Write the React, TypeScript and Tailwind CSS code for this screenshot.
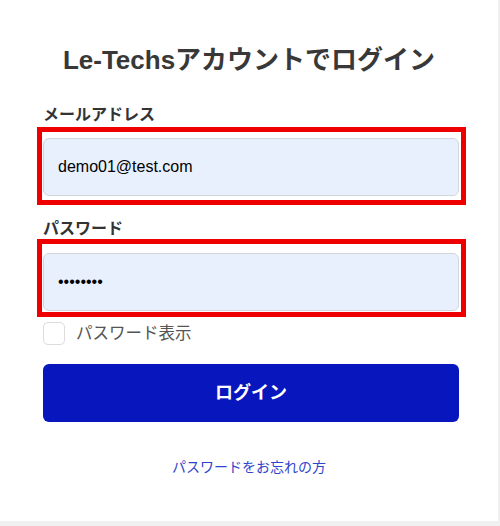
import React, { useState } from 'react';

const jp = "font-['Liberation_Sans','Noto_Sans_CJK_JP',sans-serif]";

export default function App() {
  const [email, setEmail] = useState('demo01@test.com');
  const [password, setPassword] = useState('password');
  const [showPassword, setShowPassword] = useState(false);

  return (
    <div className={`min-h-[526px] w-[500px] bg-[#f0f0f0] ${jp}`}>
      <div className="flex h-[521px] w-[498px] flex-col bg-white">
        <h1 className="mt-[41px] text-center text-[26px] leading-[38px] font-semibold text-[#383838]">
          Le-Techsアカウントでログイン
        </h1>

        <div className="mt-[24px] flex w-[429px] flex-col self-start ml-[37px]">
          <label htmlFor="email" className="ml-[6px] text-[16px] leading-[24px] font-bold text-[#333]">
            メールアドレス
          </label>
          <div className="border-[5px] border-[#ee0000] pt-[6px] pb-[4px] pl-[1px] pr-[2px]">
            <input
              id="email"
              type="email"
              value={email}
              onChange={(e) => setEmail(e.target.value)}
              className="block h-[58px] w-full rounded-[6px] border border-[#d2d6dc] bg-[#e8f0fe] px-[14px] text-[16px] text-black outline-none"
            />
          </div>

          <label htmlFor="password" className="mt-[14px] ml-[6px] text-[16px] leading-[20px] font-bold text-[#333]">
            パスワード
          </label>
          <div className="border-[5px] border-[#ee0000] pt-[9px] pb-[1px] pl-[1px] pr-[2px]">
            <input
              id="password"
              type={showPassword ? 'text' : 'password'}
              value={password}
              onChange={(e) => setPassword(e.target.value)}
              className="block h-[58px] w-full rounded-[6px] border border-[#d2d6dc] bg-[#e8f0fe] px-[14px] text-[16px] text-black outline-none"
            />
          </div>

          <label className="mt-[4px] ml-[6px] flex h-[24px] cursor-pointer items-center gap-[11px]">
            <input
              type="checkbox"
              checked={showPassword}
              onChange={(e) => setShowPassword(e.target.checked)}
              className="h-[23px] w-[22px] appearance-none rounded-[5px] border border-[#dcdcdc] bg-white"
            />
            <span className="text-[16.5px] text-[#555]">パスワード表示</span>
          </label>

          <button
            type="button"
            className="mt-[19px] ml-[6px] h-[58px] w-[416px] rounded-[6px] bg-[#0717bd] text-[18px] font-bold text-white"
          >
            ログイン
          </button>
        </div>

        <a href="#" className="mt-[35px] self-center text-[14px] leading-[20px] text-[#2f44cc]">
          パスワードをお忘れの方
        </a>
      </div>
    </div>
  );
}
